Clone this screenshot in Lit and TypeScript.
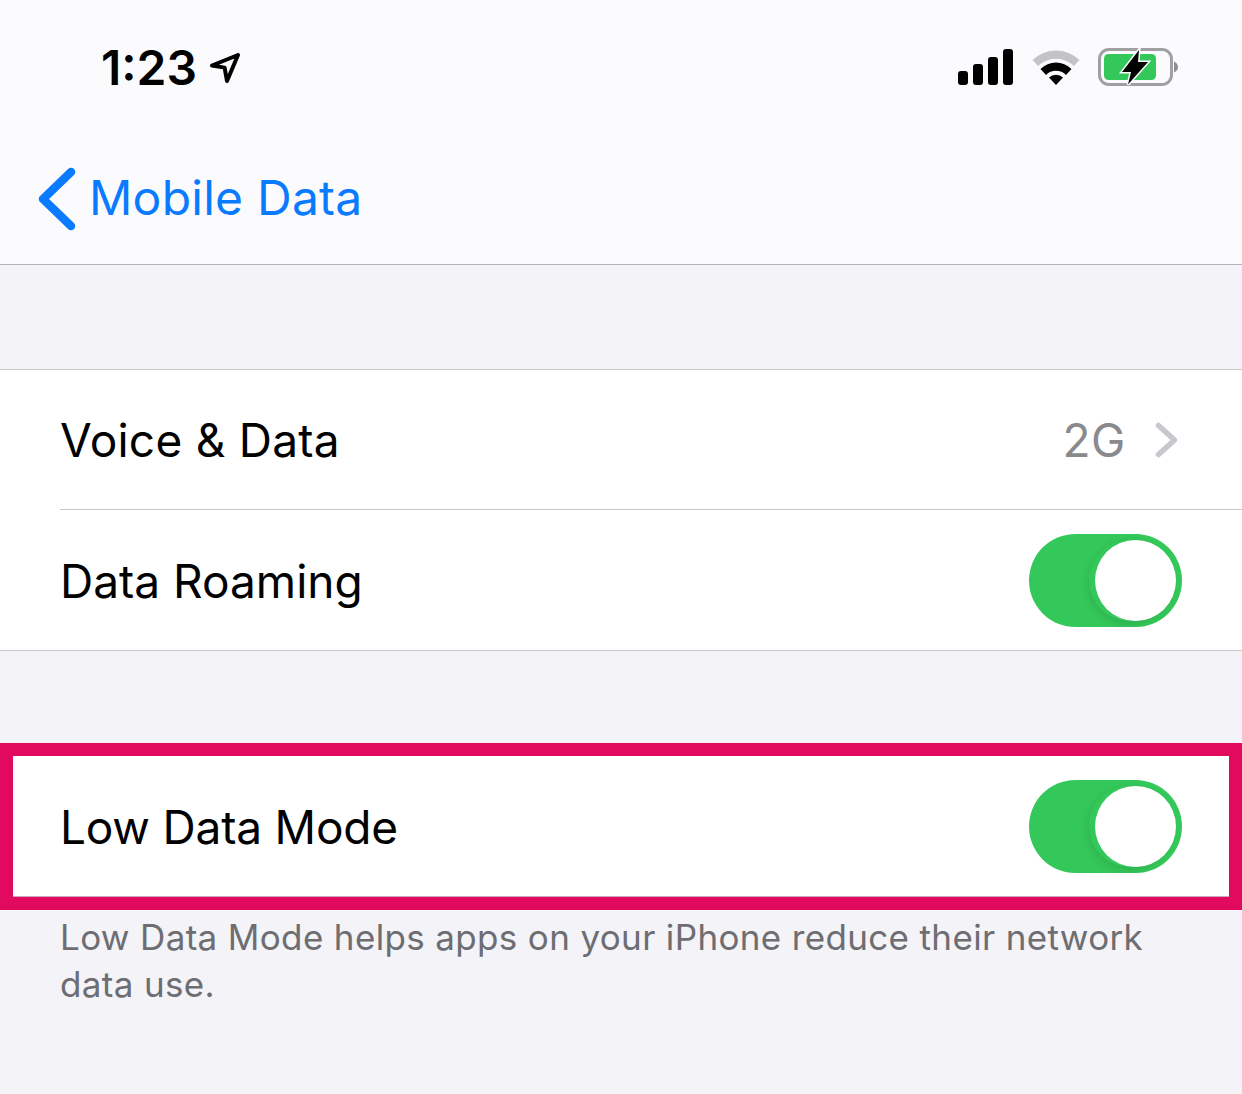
import { LitElement, html, css } from "lit";
import { customElement } from "lit/decorators.js";

@customElement("app-root")
export class AppRoot extends LitElement {
  static styles = css`
    :host { display: block; width: 1242px; height: 1094px; overflow: hidden; background: #f3f3f8; font-family: Inter, "Liberation Sans", sans-serif; color: #000; }
    * { box-sizing: border-box; }
    .top { height: 265px; background: #fbfbfd; border-bottom: 1px solid #b4b4b6; display: flex; flex-direction: column; }
    .status { height: 134px; display: flex; align-items: center; justify-content: space-between; padding: 0 64px 0 101px; }
    .time { display: flex; align-items: center; gap: 12px; font-size: 48px; font-weight: 600; letter-spacing: 0; line-height: 1; padding-top: 2px; }
    .indicators { display: flex; align-items: center; gap: 18px; }
    .nav { display: flex; align-items: center; padding-left: 38px; gap: 13px; height: 130px; color: #0a7aff; font-size: 48px; letter-spacing: 0.25px; }
    .nav span { padding-bottom: 4px; }
    svg { display: block; flex: none; }
    .spacer-a { height: 104px; }
    .group { background: #fff; border-top: 1px solid #c8c8ca; border-bottom: 1px solid #c8c8ca; }
    .row { height: 140px; display: flex; align-items: center; justify-content: space-between; padding: 0 60px; font-size: 46px; letter-spacing: 0; }
    .row .label { padding-top: 2px; }
    .row.first { height: 139px; }
    .row.first .label { padding-top: 0; letter-spacing: 0.25px; }
    .highlight .row .label { letter-spacing: -0.2px; }
    .sep { height: 1px; margin-left: 60px; background: #c8c8ca; }
    .value { display: flex; align-items: center; gap: 29px; color: #8a8a8e; padding-right: 3px; letter-spacing: 0.6px; }
    .switch { width: 153px; height: 93px; border-radius: 47px; background: #34c759; position: relative; }
    .switch::before { content: ""; position: absolute; left: 60px; top: 6px; width: 81px; height: 81px; border-radius: 50%; box-shadow: 0 3px 10px rgba(0, 0, 0, 0.12); }
    .knob { position: absolute; left: 66px; top: 6px; width: 81px; height: 81px; border-radius: 50%; background: #fff; }
    .spacer-b { height: 92px; }
    .highlight { border: 13px solid #e20a5e; background: #fff; }
    .highlight .row { padding: 0 47px; }
    .highlight .line { height: 1px; background: #c9a9b8; }
    .note { padding: 4px 60px 0; font-size: 35px; line-height: 47px; color: #6d6d72; letter-spacing: 0.35px; }
  `;

  private sw() {
    return html`<div class="switch"><div class="knob"></div></div>`;
  }

  render() {
    return html`
      <div class="top">
        <div class="status">
          <div class="time">1:23
            <svg width="32" height="32" viewBox="0 0 32 32">
              <path d="M3 13.5 L29 3 L18 29 L15.6 15.6 Z" fill="none" stroke="#000" stroke-width="4" stroke-linejoin="round"/>
            </svg>
          </div>
          <div class="indicators">
            <svg width="56" height="36" viewBox="0 0 56 36">
              <rect x="0" y="22" width="10" height="14" rx="3"/>
              <rect x="15" y="15" width="10" height="21" rx="3"/>
              <rect x="30" y="8" width="10" height="28" rx="3"/>
              <rect x="45" y="0" width="10" height="36" rx="3"/>
            </svg>
            <svg width="48" height="38" viewBox="0 0 48 38">
              <path d="M0.5 12 A34 34 0 0 1 47.500 12 L42 18 A26 26 0 0 0 6 18 Z" fill="#c4c4c6"/>
              <path d="M8.500 21 A22 22 0 0 1 39.500 21 L34 27 A14 14 0 0 0 14 27 Z" fill="#000"/>
              <path d="M17 29.5 A10 10 0 0 1 31 29.5 L24 37 Z" fill="#000"/>
            </svg>
            <svg width="80" height="38" viewBox="0 0 80 38">
              <rect x="1.5" y="1.5" width="72" height="35" rx="9.5" fill="none" stroke="#a0a0a2" stroke-width="3"/>
              <rect x="6" y="6" width="52" height="26" rx="4.5" fill="#34c759"/>
              <path d="M76 13.500 C78.500 14.500 80 16.500 80 19 C80 21.500 78.500 23.500 76 24.500 Z" fill="#8e8e90"/>
              <path d="M41 2 L24 24 H33 L30 36.500 L50 14 H40 Z" fill="#000" stroke="#fbfbfd" stroke-width="3" stroke-linejoin="miter" paint-order="stroke"/>
            </svg>
          </div>
        </div>
        <div class="nav">
          <svg width="38" height="64" viewBox="0 0 38 64">
            <path d="M33 5 L5 32 L33 59" fill="none" stroke="#0a7aff" stroke-width="8.500" stroke-linecap="round" stroke-linejoin="round"/>
          </svg>
          <span>Mobile Data</span>
        </div>
      </div>
      <div class="spacer-a"></div>
      <div class="group">
        <div class="row first">
          <span class="label">Voice &amp; Data</span>
          <span class="value">2G
            <svg width="24" height="36" viewBox="0 0 24 36">
              <path d="M3.500 3.500 L19.500 18 L3.500 32.500" fill="none" stroke="#c7c7cc" stroke-width="5.500" stroke-linecap="round" stroke-linejoin="round"/>
            </svg>
          </span>
        </div>
        <div class="sep"></div>
        <div class="row"><span class="label">Data Roaming</span>${this.sw()}</div>
      </div>
      <div class="spacer-b"></div>
      <div class="highlight">
        <div class="row"><span class="label">Low Data Mode</span>${this.sw()}</div>
        <div class="line"></div>
      </div>
      <div class="note">Low Data Mode helps apps on your iPhone reduce their network data use.</div>
    `;
  }
}
